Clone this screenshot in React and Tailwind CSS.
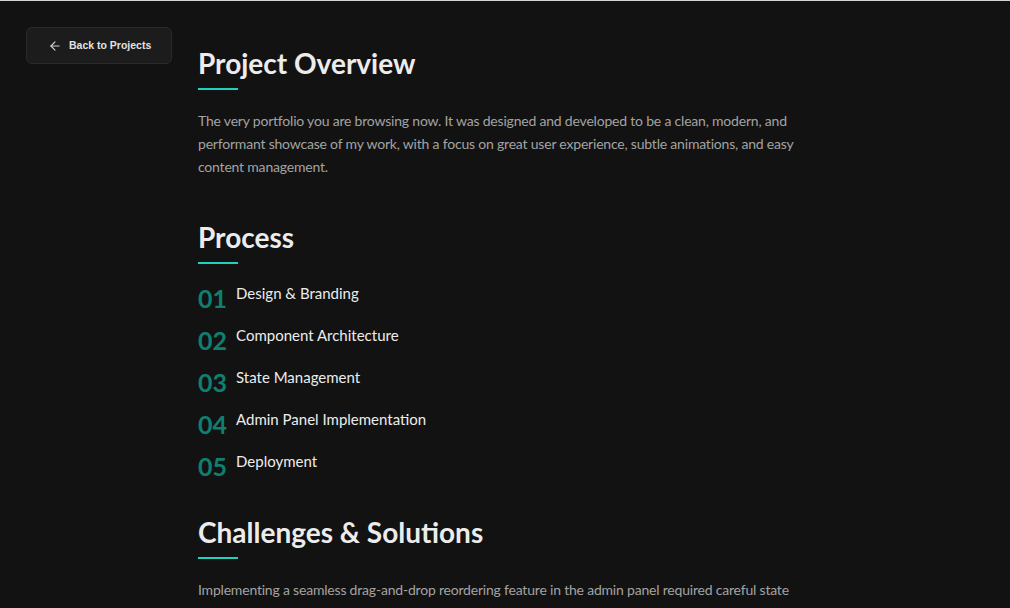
import React from 'react';
import { ArrowLeft } from 'lucide-react';

const steps = [
    'Design & Branding',
    'Component Architecture',
    'State Management',
    'Admin Panel Implementation',
    'Deployment',
];

function SectionTitle({ children }) {
    return (
        <div className="mb-[19px]">
            <h2 className="text-[28px] font-bold leading-[36px] text-[#ececec]">{children}</h2>
            <div className="mt-[7px] h-[2px] w-[40px] bg-[#1fd1bf]" />
        </div>
    );
}

export default function App() {
    return (
        <div
            className="min-h-screen border-t border-[#d4d4d4] bg-[#121212] flex"
            style={{ fontFamily: 'Lato, "Noto Sans", sans-serif' }}
        >
            {/* left column with back button */}
            <div className="w-[198px] shrink-0 pl-[26px] pt-[26px]">
                <button className="flex h-[37px] w-[146px] items-center gap-[7px] rounded-md border border-[#2a2a2a] bg-[#1c1c1c] pl-[21px] text-[10.5px] font-bold text-[#e2e2e2]" style={{ fontFamily: '"Liberation Sans", Arial, sans-serif' }}>
                    <ArrowLeft size={14} strokeWidth={2} className="text-[#d0d0d0]" />
                    Back to Projects
                </button>
            </div>

            {/* main content */}
            <div className="w-[620px] pt-[44px]">
                <section>
                    <SectionTitle>Project Overview</SectionTitle>
                    <p className="text-[14px] leading-[23px] tracking-[-0.2px] text-[#a3a3a3]">
                        The very portfolio you are browsing now. It was designed and developed to be a clean, modern, and performant showcase of my work, with a focus on great user experience, subtle animations, and easy content management.
                    </p>
                </section>

                <section className="mt-[41px]">
                    <SectionTitle>Process</SectionTitle>
                    <ul className="mt-[1px] flex flex-col gap-[14px]">
                        {steps.map((s, i) => (
                            <li key={s} className="flex items-start gap-[9px]">
                                <span className="text-[25px] font-bold leading-[25px] text-[#0f8070] mt-[3px]">0{i + 1}</span>
                                <span className="text-[15px] leading-[20px] text-[#ececec]">{s}</span>
                            </li>
                        ))}
                    </ul>
                </section>

                <section className="mt-[35px]">
                    <SectionTitle>Challenges &amp; Solutions</SectionTitle>
                    <p className="text-[14px] leading-[23px] tracking-[-0.2px] text-[#a3a3a3]">
                        Implementing a seamless drag-and-drop reordering feature in the admin panel required careful state management to ensure data integrity and provide a smooth user interaction without relying on heavy external libraries.
                    </p>
                </section>
            </div>
        </div>
    );
}
